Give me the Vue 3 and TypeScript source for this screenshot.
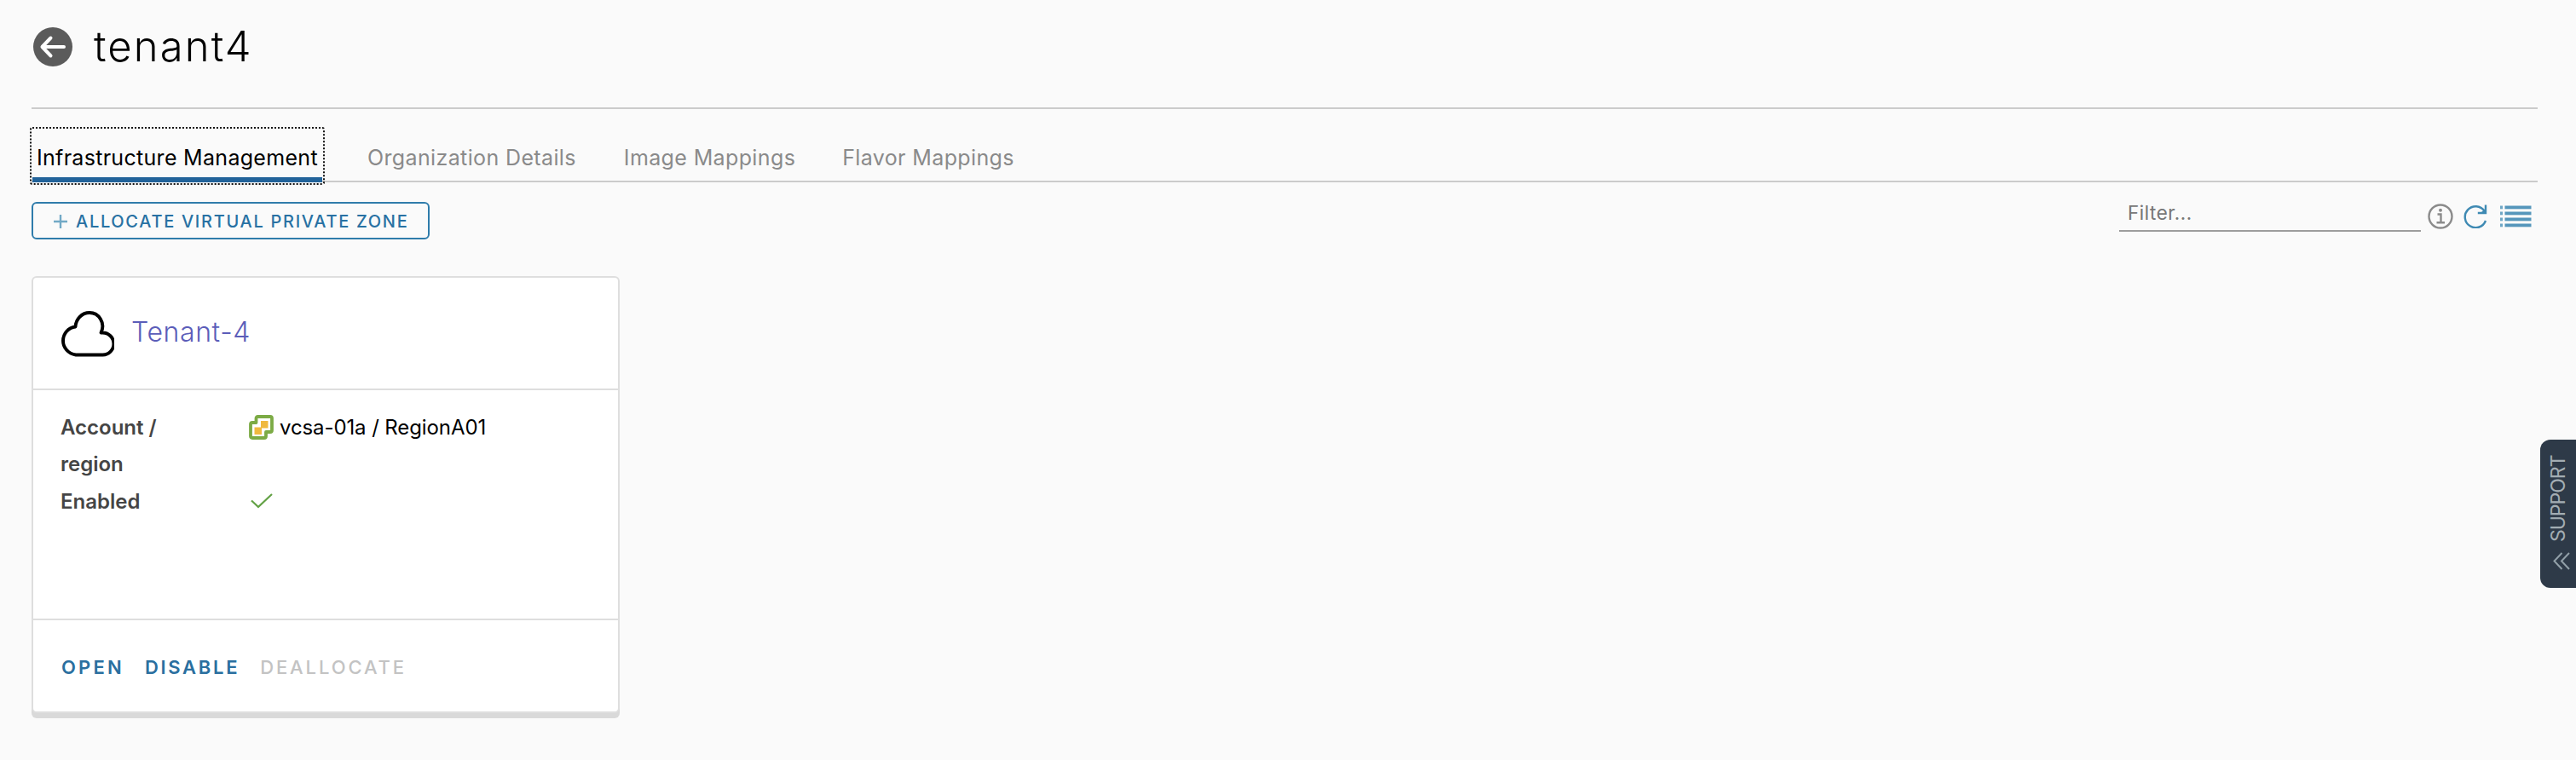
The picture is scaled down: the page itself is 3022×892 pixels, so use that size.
<script setup lang="ts">
import { ref } from 'vue'

interface Tab {
  id: string
  label: string
}

interface CardAction {
  label: string
  disabled?: boolean
}

const title = 'tenant4'
const tabs: Tab[] = [
  { id: 'infra', label: 'Infrastructure Management' },
  { id: 'org', label: 'Organization Details' },
  { id: 'image', label: 'Image Mappings' },
  { id: 'flavor', label: 'Flavor Mappings' },
]
const activeTab = ref('infra')
const filter = ref('')
const actions: CardAction[] = [
  { label: 'OPEN' },
  { label: 'DISABLE' },
  { label: 'DEALLOCATE', disabled: true },
]
const listRows = [1, 8, 15, 22]
</script>

<template>
  <div class="page">
    <header class="header">
      <svg class="back" viewBox="0 0 46 46">
        <circle cx="23" cy="23" r="23" fill="#5b5b5b" />
        <path d="M36 23H12M20.500 12.500L10.500 23L20.500 33.500" fill="none" stroke="#fff" stroke-width="4" stroke-linecap="round" stroke-linejoin="round" />
      </svg>
      <h1 class="title">{{ title }}</h1>
    </header>

    <nav class="tabs">
      <button
        v-for="tab in tabs"
        :key="tab.id"
        class="tab"
        :class="{ active: tab.id === activeTab }"
        @click="activeTab = tab.id"
      >
        <span>{{ tab.label }}</span>
      </button>
    </nav>

    <section class="toolbar">
      <button class="allocate">
        <svg class="plus" viewBox="0 0 16 16"><path d="M8 0V16M0 8H16" stroke="#72a9c6" stroke-width="2.400" /></svg>
        <span>ALLOCATE VIRTUAL PRIVATE ZONE</span>
      </button>
      <div class="tools">
        <input v-model="filter" class="filter" placeholder="Filter..." />
        <svg class="info" viewBox="0 0 30 30" fill="none" stroke="#8b8b8b">
          <circle cx="15" cy="15" r="13.500" stroke-width="2.400" />
          <path d="M11.500 12.500H15.500V22M10.500 22.300H20" stroke-width="2.400" />
          <circle cx="15" cy="7.800" r="2" fill="#8b8b8b" stroke="none" />
        </svg>
        <svg class="refresh" viewBox="0 0 28 28" fill="none" stroke="#3f8ab3" stroke-width="2.400">
          <path d="M26 19A12.500 12.500 0 1 1 24.500 7.500" />
          <path d="M26 0.500V10H16.800" />
          <path d="M20.500 9.500L25.500 5V9.500Z" fill="#3f8ab3" stroke="none" />
        </svg>
        <svg class="list" viewBox="0 0 37 27" fill="#5596bb">
          <g v-for="y in listRows" :key="y">
            <rect x="0" :y="y - 0.500" width="3" height="3.800" opacity=".85" />
            <rect x="5.500" :y="y - 0.500" width="31" height="3.800" />
          </g>
        </svg>
      </div>
    </section>

    <article class="card">
      <div class="card-head">
        <svg class="cloud" viewBox="0 0 62 54">
          <path d="M17 51.500H48.500A13 13 0 0 0 48.300 25.500H46.500C52 14 44 2 33 2C24 2 17 9.500 16.500 18.500C8 19.500 2 26.500 2 35C2 43 8 50 17 51.500Z" fill="none" stroke="#000" stroke-width="3.900" stroke-linejoin="round" />
        </svg>
        <a class="name">Tenant-4</a>
      </div>
      <dl class="card-body">
        <dt>Account /<br />region</dt>
        <dd>
          <svg class="vcenter" viewBox="0 0 29 29">
            <path d="M10.500 2H25Q27 2 27 4V18Q27 20 25 20H20V25Q20 27 18 27H4Q2 27 2 25V11Q2 9 4 9H8.500V4Q8.500 2 10.500 2Z" fill="#fff" stroke="#7cab45" stroke-width="3.800" stroke-linejoin="round" />
            <path d="M14 7H22.500V15.500H15V23H6.500V14.500H14Z" fill="#f0b93f" />
          </svg>
          <span class="account">vcsa-01a / RegionA01</span>
        </dd>
        <dt>Enabled</dt>
        <dd>
          <svg class="check" viewBox="0 0 26 18"><path d="M1 8.500L9 16L25 1" fill="none" stroke="#62a144" stroke-width="2.200" /></svg>
        </dd>
      </dl>
      <footer class="card-foot">
        <button v-for="a in actions" :key="a.label" class="action" :disabled="a.disabled">{{ a.label }}</button>
      </footer>
    </article>

    <aside class="support">
      <span>SUPPORT</span>
      <svg class="chevrons" viewBox="0 0 20 21"><path d="M10.500 1L1.500 10.500L10.500 20M19 1L10 10.500L19 20" fill="none" stroke="#92a0a8" stroke-width="2" /></svg>
    </aside>
  </div>
</template>

<style>
body {
  background: #fafafa;
}
</style>

<style scoped>
.page {
  box-sizing: border-box;
  position: relative;
  height: 892px;
  padding: 0 45px 0 37px;
  overflow: hidden;
  background: #fafafa;
  color: #000;
  font-family: "Inter", "Liberation Sans", sans-serif;
}
svg {
  display: block;
  flex: none;
}
button {
  margin: 0;
  padding: 0;
  border: 0;
  background: none;
  font-family: inherit;
  white-space: nowrap;
}
.header {
  box-sizing: border-box;
  display: flex;
  align-items: center;
  height: 128px;
  padding: 0 0 16px 2px;
  border-bottom: 2px solid #cbcbcb;
}
.back {
  width: 46px;
  height: 46px;
}
.title {
  margin: 0 0 0 25px;
  font-size: 49px;
  font-weight: 300;
  line-height: 60px;
  letter-spacing: 2.100px;
}
.tabs {
  box-sizing: border-box;
  display: flex;
  gap: 55px;
  height: 86px;
  padding-top: 23px;
  border-bottom: 2px solid #cbcbcb;
}
.tab {
  display: flex;
  align-items: flex-start;
  color: #8a8a8a;
  font-size: 25px;
  line-height: 69px;
  letter-spacing: 0.370px;
}
.tab:nth-child(2) {
  margin-right: 1px;
}
.tab.active {
  box-sizing: border-box;
  width: 342px;
  height: 64px;
  margin-right: -3px;
  padding: 0 1px 1px;
  outline: 2px dotted #111;
  border-radius: 1px;
  color: #000;
  letter-spacing: 0.300px;
}
.tab.active span {
  box-sizing: border-box;
  width: 340px;
  height: 63px;
  padding-left: 5px;
  border-bottom: 6px solid #22639a;
  text-align: left;
}
.toolbar {
  display: flex;
  justify-content: space-between;
  align-items: flex-start;
  padding-top: 23px;
}
.allocate {
  box-sizing: border-box;
  display: flex;
  align-items: center;
  width: 467px;
  height: 44px;
  padding: 2px 0 0 24px;
  border: 2px solid #2f7cab;
  border-radius: 6px;
  color: #2871a3;
  font-size: 20px;
  font-weight: 500;
  letter-spacing: 1.700px;
}
.plus {
  width: 16px;
  height: 16px;
  margin-right: 10px;
}
.tools {
  display: flex;
  align-items: flex-start;
  margin-right: 7px;
}
.filter {
  box-sizing: border-box;
  width: 354px;
  height: 44px;
  margin: -9px 8px 0 0;
  padding: 0 0 0 10px;
  border: 0;
  border-bottom: 2px solid #9d9d9d;
  outline: 0;
  background: none;
  font: 400 22.500px "Inter", sans-serif;
  letter-spacing: 0.500px;
}
.filter::placeholder {
  color: #777;
  opacity: 1;
}
.info {
  width: 30px;
  height: 30px;
  margin: 2px 12px 0 0;
}
.refresh {
  width: 28px;
  height: 28px;
  margin: 3px 15px 0 0;
}
.list {
  width: 37px;
  height: 27px;
  margin-top: 4px;
}
.card {
  box-sizing: border-box;
  display: grid;
  grid-template-rows: 132px 270px 1fr;
  width: 690px;
  height: 513px;
  margin-top: 43px;
  border: 2px solid #dedede;
  border-radius: 6px;
  background: #fff;
  box-shadow: 0 6px 0 #d9d9d9;
}
.card-head {
  box-sizing: border-box;
  display: flex;
  align-items: center;
  padding: 2px 0 0 33px;
  border-bottom: 2px solid #dedede;
}
.cloud {
  width: 62px;
  height: 54px;
}
.name {
  margin: -5px 0 0 20px;
  color: #5b5db9;
  font-size: 32px;
  font-weight: 300;
  letter-spacing: 0.600px;
}
.card-body {
  box-sizing: border-box;
  display: grid;
  grid-template-columns: 221px 1fr;
  grid-auto-rows: min-content;
  margin: 0;
  padding: 22px 0 0 32px;
  border-bottom: 2px solid #dedede;
  font-size: 24px;
  line-height: 43.300px;
}
dt {
  color: #454545;
  font-weight: 600;
}
dd {
  display: flex;
  align-items: center;
  height: 43.300px;
  margin: 0;
}
.vcenter {
  width: 29px;
  height: 29px;
  margin-right: 7px;
}
.account {
  letter-spacing: -0.100px;
}
.check {
  width: 26px;
  height: 18px;
  margin-left: 2px;
}
.card-foot {
  display: flex;
  align-items: center;
  gap: 24px;
  padding: 0 0 0 33px;
}
.action {
  padding-top: 3px;
  color: #2a6f9f;
  font-size: 22px;
  font-weight: 600;
  letter-spacing: 2.700px;
}
.action:first-child {
  letter-spacing: 3.200px;
}
.action:disabled {
  color: #c3c3c3;
  font-weight: 500;
  letter-spacing: 2.900px;
}
.support {
  position: absolute;
  top: 516px;
  right: 0;
  box-sizing: border-box;
  display: flex;
  flex-direction: column;
  align-items: center;
  width: 42px;
  height: 174px;
  padding-top: 19px;
  border-radius: 12px 0 0 12px;
  background: #2e3a48;
  color: #a3adb3;
}
.support span {
  writing-mode: vertical-rl;
  transform: rotate(180deg);
  height: 101px;
  font-size: 23px;
  line-height: 42px;
  letter-spacing: -1px;
}
.chevrons {
  width: 20px;
  height: 21px;
  margin: 12px 0 0 7px;
}
</style>
